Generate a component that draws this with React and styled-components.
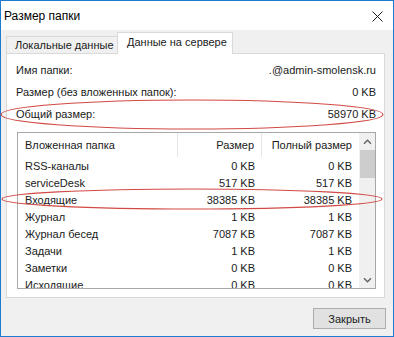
import React from "react";
import styled, { createGlobalStyle } from "styled-components";

const GlobalStyle = createGlobalStyle`
  html, body {
    margin: 0;
    padding: 0;
    background: #ffffff;
  }
  body {
    font-family: "Liberation Sans", Arial, sans-serif;
    font-size: 11px;
    color: #1a1a1a;
  }
`;

const info = [
  { label: "Имя папки:", value: ".@admin-smolensk.ru" },
  { label: "Размер (без вложенных папок):", value: "0 KB" },
  { label: "Общий размер:", value: "58970 KB" },
];

const folders = [
  ["RSS-каналы", "0 KB", "0 KB"],
  ["serviceDesk", "517 KB", "517 KB"],
  ["Входящие", "38385 KB", "38385 KB"],
  ["Журнал", "1 KB", "1 KB"],
  ["Журнал бесед", "7087 KB", "7087 KB"],
  ["Задачи", "1 KB", "1 KB"],
  ["Заметки", "0 KB", "0 KB"],
  ["Исходящие", "0 KB", "0 KB"],
];

const Chevron = ({ down }) => (
  <svg width="9" height="6" viewBox="0 0 9 6">
    <path
      d={down ? "M1 1.2 L4.5 4.7 L8 1.2" : "M1 4.8 L4.5 1.3 L8 4.8"}
      fill="none"
      stroke="#606060"
      strokeWidth="1.4"
    />
  </svg>
);

const App = () => {
  return (
    <React.Fragment>
      <GlobalStyle />
      <Window>
        <TitleBar>
          <Title>Размер папки</Title>
          <CloseBtn>
            <svg width="11" height="11" viewBox="0 0 11 11">
              <path d="M0.5 0.5 L10.5 10.5 M10.5 0.5 L0.5 10.5" stroke="#1a1a1a" strokeWidth="1" />
            </svg>
          </CloseBtn>
        </TitleBar>
        <Body>
          <Tabs>
            <Tab>Локальные данные</Tab>
            <Tab active>Данные на сервере</Tab>
          </Tabs>
          <Panel>
            {info.map((row) => (
              <InfoRow key={row.label}>
                <span>{row.label}</span>
                <span>{row.value}</span>
              </InfoRow>
            ))}
            <ListBox>
              <Table>
                <HeaderRow>
                  <HeadCell>Вложенная папка</HeadCell>
                  <HeadCell right>Размер</HeadCell>
                  <HeadCell right last>Полный размер</HeadCell>
                </HeaderRow>
                {folders.map((f) => (
                  <Row key={f[0]}>
                    <Cell>{f[0]}</Cell>
                    <Cell right>{f[1]}</Cell>
                    <Cell right>{f[2]}</Cell>
                  </Row>
                ))}
              </Table>
              <ScrollBar>
                <ScrollArrow>
                  <Chevron />
                </ScrollArrow>
                <Thumb />
                <Track />
                <ScrollArrow>
                  <Chevron down />
                </ScrollArrow>
              </ScrollBar>
            </ListBox>
          </Panel>
          <Footer>
            <Button>Закрыть</Button>
          </Footer>
        </Body>
        <Marks width="394" height="337" viewBox="0 0 394 337">
          <ellipse cx="192" cy="114.5" rx="191" ry="14.5" fill="none" stroke="#d24a45" strokeWidth="1.2" />
          <ellipse cx="192" cy="199" rx="190" ry="10" fill="none" stroke="#d24a45" strokeWidth="1.2" />
        </Marks>
      </Window>
    </React.Fragment>
  );
};

const Window = styled.div`
  position: relative;
  width: 394px;
  height: 337px;
  box-sizing: border-box;
  border: 1px solid #1f7bcf;
  display: flex;
  flex-direction: column;
  background: #f0f0f0;
`;

const TitleBar = styled.div`
  height: 29px;
  background: #ffffff;
  display: flex;
  align-items: center;
  justify-content: space-between;
  padding: 0 10px 0 3px;
`;

const Title = styled.div`
  font-size: 12px;
  color: #000;
`;

const CloseBtn = styled.div`
  display: flex;
  align-items: center;
  padding-top: 1px;
`;

const Body = styled.div`
  flex: 1;
  display: flex;
  flex-direction: column;
  padding: 2px 8px 0 5px;
`;

const Tabs = styled.div`
  display: flex;
  align-items: flex-end;
  height: 22px;
  margin-bottom: -1px;
  position: relative;
  z-index: 1;
`;

const Tab = styled.div`
  box-sizing: border-box;
  display: flex;
  align-items: center;
  border: 1px solid #d9d9d9;
  border-bottom: none;
  height: ${(p) => (p.active ? "22px" : "17px")};
  margin-bottom: ${(p) => (p.active ? "0" : "1px")};
  width: ${(p) => (p.active ? "116px" : "112px")};
  padding: ${(p) => (p.active ? "0 0 3px 9px" : "0 0 0 8px")};
  background: ${(p) => (p.active ? "#ffffff" : "#f0f0f0")};
  margin-left: ${(p) => (p.active ? "-1px" : "0")};
  white-space: nowrap;
`;

const Panel = styled.div`
  height: 245px;
  box-sizing: border-box;
  background: #ffffff;
  border: 1px solid #d9d9d9;
  padding: 5px 8px 0 9px;
  display: flex;
  flex-direction: column;
`;

const InfoRow = styled.div`
  height: 22px;
  display: flex;
  align-items: center;
  justify-content: space-between;
`;

const ListBox = styled.div`
  margin: 7px 0 0 1px;
  height: 157px;
  box-sizing: border-box;
  border: 1px solid #a8a8a8;
  display: flex;
  overflow: hidden;
`;

const Table = styled.div`
  flex: 1;
  display: flex;
  flex-direction: column;
`;

const HeaderRow = styled.div`
  height: 24px;
  flex-shrink: 0;
  display: grid;
  grid-template-columns: 160px 84px 97px;
`;

const Row = styled.div`
  height: 17px;
  flex-shrink: 0;
  display: grid;
  grid-template-columns: 160px 84px 97px;
  align-items: center;
`;

const HeadCell = styled.div`
  display: flex;
  align-items: center;
  justify-content: ${(p) => (p.right ? "flex-end" : "flex-start")};
  padding: 0 7px;
  border-right: ${(p) => (p.last ? "none" : "1px solid #e5e5e5")};
  white-space: nowrap;
`;

const Cell = styled.div`
  text-align: ${(p) => (p.right ? "right" : "left")};
  padding: 0 7px;
  white-space: nowrap;
`;

const ScrollBar = styled.div`
  width: 17px;
  flex-shrink: 0;
  background: #f0f0f0;
  display: flex;
  flex-direction: column;
`;

const ScrollArrow = styled.div`
  height: 17px;
  flex-shrink: 0;
  display: flex;
  align-items: center;
  justify-content: center;
`;

const Thumb = styled.div`
  height: 28px;
  margin: 0 1px;
  background: #cdcdcd;
`;

const Track = styled.div`
  flex: 1;
`;

const Footer = styled.div`
  display: flex;
  justify-content: flex-end;
  padding-top: 10px;
  margin-right: -1px;
`;

const Button = styled.div`
  width: 73px;
  height: 21px;
  box-sizing: border-box;
  background: #e1e1e1;
  border: 1px solid #adadad;
  display: flex;
  align-items: center;
  justify-content: center;
`;

const Marks = styled.svg`
  position: absolute;
  top: -1px;
  left: -1px;
  pointer-events: none;
`;

export default App;
